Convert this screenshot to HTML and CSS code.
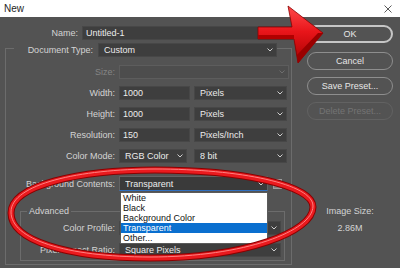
FILE: index.html
```html
<!DOCTYPE html>
<html>
<head>
<meta charset="utf-8">
<link rel="stylesheet" href="styles.css">
</head>
<body>
<div class="titlebar">
  <span class="title">New</span>
  <svg class="close" width="8" height="8" viewBox="0 0 8 8"><path d="M0.5 0.5 L7.5 7.5 M7.5 0.5 L0.5 7.5" stroke="#5a5a5a" stroke-width="1"/></svg>
</div>
<div class="dialog">
  <div class="left">
    <div class="row name-row">
      <span class="lbl">Name:</span>
      <div class="field name-field">Untitled-1</div>
    </div>
    <div class="group">
      <div class="row doc-row">
        <span class="lbl">Document Type:</span>
        <div class="select doc-select"><span>Custom</span><svg class="chev" width="6" height="4" viewBox="0 0 6 4"><polyline points="0.5,0.5 3,3 5.5,0.5" fill="none" stroke="#cfcfcf" stroke-width="1"/></svg></div>
      </div>
      <div class="row grp-row size-row">
        <span class="lbl lbl-dis">Size:</span>
        <div class="select size-select"><span></span><svg class="chev" width="6" height="4" viewBox="0 0 6 4"><polyline points="0.5,0.5 3,3 5.5,0.5" fill="none" stroke="#6e6e6e" stroke-width="1"/></svg></div>
      </div>
      <div class="row grp-row">
        <span class="lbl">Width:</span>
        <div class="field num">1000</div>
        <div class="select unit"><span>Pixels</span><svg class="chev" width="6" height="4" viewBox="0 0 6 4"><polyline points="0.5,0.5 3,3 5.5,0.5" fill="none" stroke="#cfcfcf" stroke-width="1"/></svg></div>
      </div>
      <div class="row grp-row">
        <span class="lbl">Height:</span>
        <div class="field num">1000</div>
        <div class="select unit"><span>Pixels</span><svg class="chev" width="6" height="4" viewBox="0 0 6 4"><polyline points="0.5,0.5 3,3 5.5,0.5" fill="none" stroke="#cfcfcf" stroke-width="1"/></svg></div>
      </div>
      <div class="row grp-row">
        <span class="lbl">Resolution:</span>
        <div class="field num">150</div>
        <div class="select unit"><span>Pixels/Inch</span><svg class="chev" width="6" height="4" viewBox="0 0 6 4"><polyline points="0.5,0.5 3,3 5.5,0.5" fill="none" stroke="#cfcfcf" stroke-width="1"/></svg></div>
      </div>
      <div class="row grp-row">
        <span class="lbl">Color Mode:</span>
        <div class="select mode"><span>RGB Color</span><svg class="chev" width="6" height="4" viewBox="0 0 6 4"><polyline points="0.5,0.5 3,3 5.5,0.5" fill="none" stroke="#cfcfcf" stroke-width="1"/></svg></div>
        <div class="select unit bits"><span>8 bit</span><svg class="chev" width="6" height="4" viewBox="0 0 6 4"><polyline points="0.5,0.5 3,3 5.5,0.5" fill="none" stroke="#cfcfcf" stroke-width="1"/></svg></div>
      </div>
      <div class="row grp-row bg-row">
        <span class="lbl">Background Contents:</span>
        <div class="select bg-select"><span>Transparent</span><svg class="chev" width="6" height="4" viewBox="0 0 6 4"><polyline points="0.5,0.5 3,3 5.5,0.5" fill="none" stroke="#cfcfcf" stroke-width="1"/></svg></div>
        <div class="swatch"></div>
      </div>
      <div class="adv">
        <div class="legend">Advanced</div>
        <div class="row adv-row first">
          <span class="lbl">Color Profile:</span>
          <div class="select adv-select"><span></span><svg class="chev" width="6" height="4" viewBox="0 0 6 4"><polyline points="0.5,0.5 3,3 5.5,0.5" fill="none" stroke="#cfcfcf" stroke-width="1"/></svg></div>
        </div>
        <div class="row adv-row second">
          <span class="lbl">Pixel Aspect Ratio:</span>
          <div class="select adv-select"><span>Square Pixels</span><svg class="chev" width="6" height="4" viewBox="0 0 6 4"><polyline points="0.5,0.5 3,3 5.5,0.5" fill="none" stroke="#cfcfcf" stroke-width="1"/></svg></div>
        </div>
      </div>
    </div>
  </div>
  <div class="right">
    <div class="btn btn-ok">OK</div>
    <div class="btn">Cancel</div>
    <div class="btn">Save Preset...</div>
    <div class="btn btn-dis">Delete Preset...</div>
    <div class="imgsize">Image Size:</div>
    <div class="imgsize-val">2.86M</div>
  </div>
</div>
<ul class="dropdown">
  <li>White</li>
  <li>Black</li>
  <li>Background Color</li>
  <li class="sel">Transparent</li>
  <li>Other...</li>
</ul>
<svg class="annot" width="400" height="268" viewBox="0 0 400 268">
  <defs>
    <linearGradient id="arrowg" x1="0" y1="0" x2="0" y2="1">
      <stop offset="0" stop-color="#ff4a4a"/>
      <stop offset="0.45" stop-color="#e8151a"/>
      <stop offset="1" stop-color="#a80000"/>
    </linearGradient>
  </defs>
  <path d="M 11 213 C 11 185, 80 170, 155 170 C 240 170, 313 185, 313 207 C 313 232, 245 258, 150 258 C 65 258, 11 240, 11 213 Z" fill="none" stroke="#8a0000" stroke-width="7"/>
  <path d="M 11 213 C 11 185, 80 170, 155 170 C 240 170, 313 185, 313 207 C 313 232, 245 258, 150 258 C 65 258, 11 240, 11 213 Z" fill="none" stroke="#ea1a1e" stroke-width="5"/>
  <path d="M 11 212 C 11 184, 80 169, 155 169 C 240 169, 313 184, 313 206 C 313 231, 245 257, 150 257 C 65 257, 11 239, 11 212 Z" fill="none" stroke="#ff8080" stroke-width="1"/>
  <polygon points="258,27 292,27 288,6 323,33 298,63 294,39 258,39" fill="url(#arrowg)" stroke="#8a0000" stroke-width="0.8"/>
  <polygon points="294,39 298,63 323,33 318,33 297,55" fill="#9a0000"/>
  <polygon points="258,35 294,35 294,39 258,39" fill="#b00000"/>
</svg>
</body>
</html>
```
FILE: styles.css
```css
body {
  margin: 0;
  width: 400px;
  height: 268px;
  overflow: hidden;
  position: relative;
  background: #535353;
  font-family: "Liberation Sans", Arial, sans-serif;
  font-size: 9px;
  color: #d4d4d4;
}

.titlebar {
  height: 17px;
  background: #ffffff;
  display: flex;
  align-items: center;
  justify-content: space-between;
  padding: 0 8px 0 4px;
  box-sizing: border-box;
}

.title {
  font-size: 10px;
  color: #1e1e1e;
}

.dialog {
  display: flex;
  height: 251px;
}

.left {
  width: 300px;
  padding-top: 9px;
  box-sizing: border-box;
}

.row {
  display: flex;
  align-items: center;
  height: 14px;
}

.lbl {
  flex: none;
  text-align: right;
  color: #d4d4d4;
  white-space: nowrap;
}

.lbl-dis {
  color: #858585;
}

.field,
.select {
  flex: none;
  height: 14px;
  box-sizing: border-box;
  background: #3e3e3e;
  border: 1px solid #474747;
  color: #ececec;
  line-height: 12px;
  white-space: nowrap;
  overflow: hidden;
}

.field {
  padding-left: 3px;
}

.select {
  display: flex;
  align-items: center;
  padding: 0 3px 0 5px;
}

.select span {
  flex: 1;
  overflow: hidden;
}

.chev {
  flex: none;
  margin-left: 3px;
}

.name-row .lbl {
  width: 78px;
  margin-right: 4px;
}

.name-field {
  width: 211px;
}

.group {
  margin: 8px 0 0 5px;
  width: 287px;
  height: 217px;
  border: 1px solid #6c6c6c;
  box-sizing: border-box;
}

.doc-row {
  margin: -6px 0 0 8px;
  width: 263px;
  background: #535353;
}

.doc-row .lbl {
  width: 79px;
  margin-right: 5px;
}

.doc-select {
  width: 179px;
}

.grp-row {
  margin-top: 7px;
}

.grp-row .lbl {
  width: 109px;
  margin-right: 4px;
}

.size-row {
  margin-top: 8px;
}

.size-select {
  width: 170px;
  background: #4d4d4d;
  border-color: #5d5d5d;
}

.num {
  width: 71px;
}

.unit {
  width: 93px;
  margin-left: 4px;
}

.mode {
  width: 68px;
}

.bits {
  margin-left: 7px;
}

.bg-row {
  margin-top: 13px;
  height: 15px;
}

.bg-select {
  width: 149px;
  height: 15px;
  background: #3a3a3a;
  border-color: #626262 #626262 #2f6fc0 #626262;
}

.swatch {
  flex: none;
  width: 9px;
  height: 10px;
  margin-left: 5px;
  background: #808080;
  border: 1px solid #9c9c9c;
  box-sizing: border-box;
}

.adv {
  margin: 20px 0 0 14px;
  width: 265px;
  height: 50px;
  border: 1px solid #6c6c6c;
  box-sizing: border-box;
}

.legend {
  width: fit-content;
  margin: -7px 0 0 6px;
  padding: 0 2px;
  line-height: 12px;
  background: #535353;
  color: #d4d4d4;
}

.adv-row .lbl {
  width: 94px;
  margin-right: 4px;
}

.adv-row.first {
  margin-top: 4px;
}

.adv-row.second {
  margin-top: 8px;
}

.adv-select {
  width: 162px;
}

.right {
  width: 100px;
  display: flex;
  flex-direction: column;
  align-items: center;
  padding-top: 8px;
  box-sizing: border-box;
}

.btn {
  width: 86px;
  height: 18px;
  box-sizing: border-box;
  border: 1px solid #8e8e8e;
  border-radius: 9px;
  display: flex;
  align-items: center;
  justify-content: center;
  color: #e6e6e6;
  margin-bottom: 7px;
}

.btn-ok {
  border: 2px solid #c6c6c6;
  margin-bottom: 9px;
}

.btn-dis {
  color: #747474;
  border-color: #626262;
}

.imgsize {
  margin-top: 78px;
  line-height: 12px;
  text-align: center;
}

.imgsize-val {
  margin-top: 5px;
  line-height: 12px;
  text-align: center;
}

.dropdown {
  position: absolute;
  left: 120px;
  top: 192px;
  width: 148px;
  margin: 0;
  padding: 0;
  list-style: none;
  background: #ffffff;
  border: 1px solid #5a5a5a;
  box-sizing: border-box;
}

.dropdown li {
  height: 10px;
  line-height: 10px;
  padding-left: 2px;
  color: #111111;
}

.dropdown li.sel {
  background: #0a6fcf;
  color: #ffffff;
}

.annot {
  position: absolute;
  left: 0;
  top: 0;
  pointer-events: none;
}
```
